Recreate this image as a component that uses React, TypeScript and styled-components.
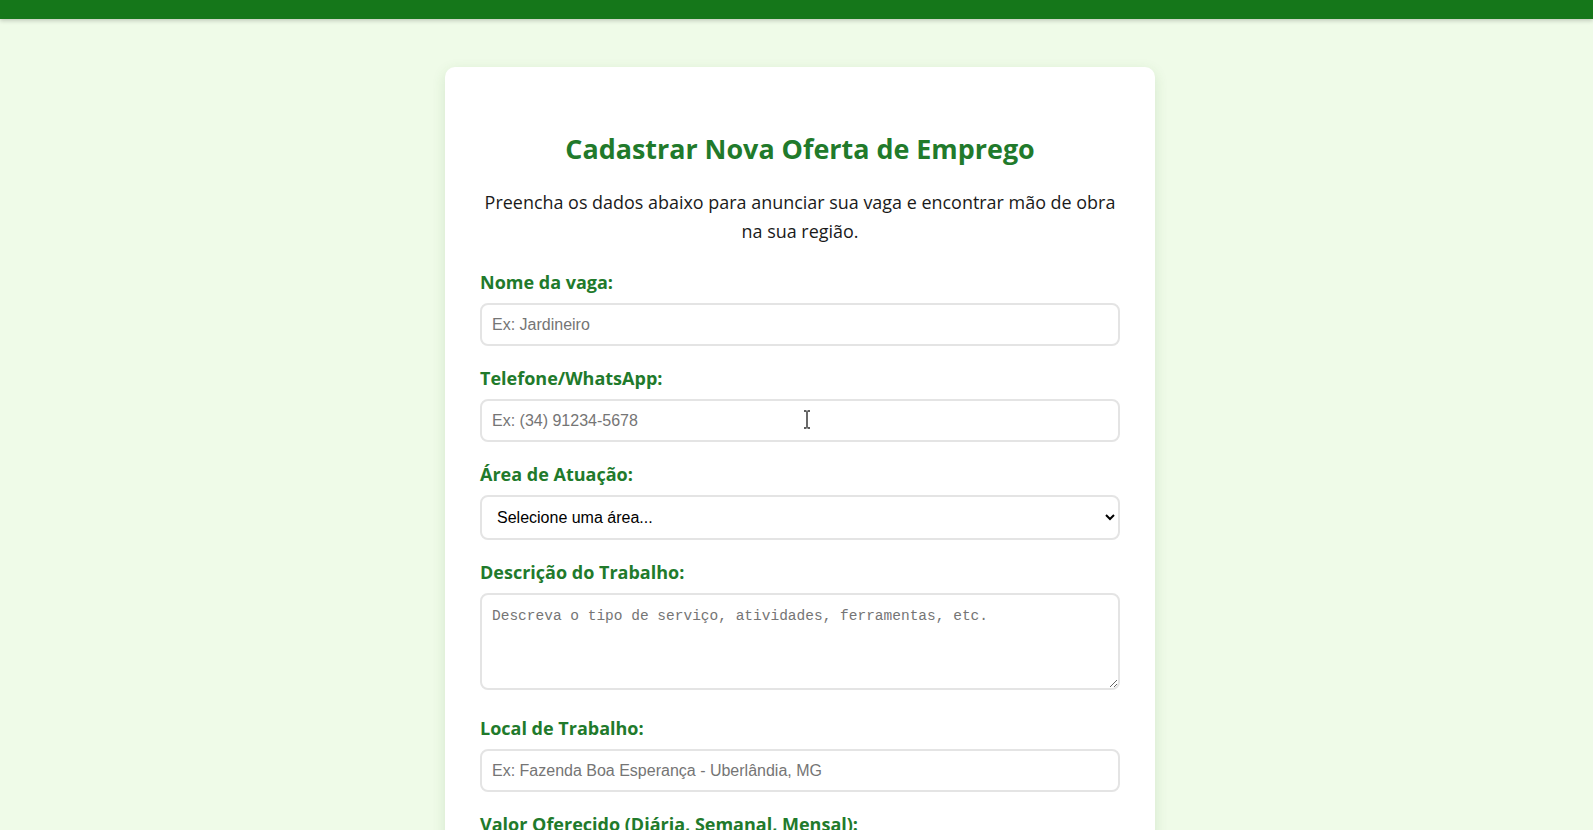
import React from "react";
import styled, { createGlobalStyle } from "styled-components";

const GlobalStyle = createGlobalStyle`
  html, body {
    margin: 0;
    padding: 0;
    background: #effbe8;
    scrollbar-width: none;
  }
  html::-webkit-scrollbar, body::-webkit-scrollbar { display: none; }
  body {
    font-family: "Open Sans", "Noto Sans", sans-serif;
    color: #1d1d1d;
  }
  * { box-sizing: border-box; }
`;

const TopBar = styled.header`
  height: 19px;
  background: #15771a;
  box-shadow: 0 2px 4px rgba(0, 0, 0, 0.18);
`;

const Main = styled.main`
  display: flex;
  justify-content: center;
  padding: 48px 0 48px 7px;
`;

const Card = styled.section`
  width: 710px;
  background: #ffffff;
  border-radius: 10px;
  box-shadow: 0 4px 14px rgba(60, 110, 40, 0.14);
  padding: 35px 35px 40px;
`;

const Title = styled.h2`
  margin: 31px 0 23.5px;
  font-size: 26.9px;
  line-height: 31px;
  font-weight: 700;
  text-align: center;
  color: #217a2b;
`;

const Intro = styled.p`
  margin: 0 0 25.5px;
  font-size: 17.95px;
  line-height: 29px;
  text-align: center;
  color: #1a1a1a;
`;

const Form = styled.form`
  display: flex;
  flex-direction: column;
`;

const Field = styled.div<{ $after?: number }>`
  position: relative;
  display: flex;
  flex-direction: column;
  gap: 9px;
  margin-bottom: ${(p) => p.$after ?? 21}px;
`;

const Label = styled.label`
  display: block;
  font-size: 18px;
  line-height: 23px;
  font-weight: 700;
  color: #217a2b;
`;

const controlBase = `
  width: 100%;
  border: 2px solid #e4e4e4;
  border-radius: 8px;
  background: #ffffff;
  color: #111;
  outline: none;
`;

const TextInput = styled.input`
  ${controlBase}
  height: 43px;
  padding: 0 10px;
  font-family: "Liberation Sans", Arial, sans-serif;
  font-size: 16px;
  &::placeholder { color: #757575; }
`;

const Select = styled.select`
  ${controlBase}
  height: 45px;
  padding: 0 11px;
  font-family: "Liberation Sans", Arial, sans-serif;
  font-size: 16px;
  color: #000;
`;

const TextArea = styled.textarea`
  ${controlBase}
  display: block;
  height: 97px;
  padding: 12px 10px;
  resize: vertical;
  font-family: "Liberation Mono", "DejaVu Sans Mono", monospace;
  font-size: 14.5px;
  line-height: 19px;
  &::placeholder { color: #757575; }
`;

const Cursor = styled.svg`
  position: absolute;
  left: 323px;
  top: 42.5px;
  width: 8px;
  height: 19px;
  pointer-events: none;
`;

const SubmitButton = styled.button`
  width: 100%;
  height: 48px;
  border: none;
  border-radius: 8px;
  background: #15771a;
  color: #fff;
  font-family: "Open Sans", sans-serif;
  font-size: 17px;
  font-weight: 700;
`;

export default function App() {
  return (
    <>
      <GlobalStyle />
      <TopBar />
      <Main>
        <Card>
          <Title>Cadastrar Nova Oferta de Emprego</Title>
          <Intro>
            Preencha os dados abaixo para anunciar sua vaga e encontrar mão de obra na sua região.
          </Intro>
          <Form onSubmit={(e) => e.preventDefault()}>
            <Field>
              <Label htmlFor="vaga">Nome da vaga:</Label>
              <TextInput id="vaga" placeholder="Ex: Jardineiro" />
            </Field>
            <Field>
              <Label htmlFor="tel">Telefone/WhatsApp:</Label>
              <TextInput id="tel" placeholder="Ex: (34) 91234-5678" />
              <Cursor viewBox="0 0 8 19">
                <path d="M1 1h2.5M4.5 1H7M4 1.5v16M1 18h2.5M4.5 18H7" stroke="#2b2b2b" strokeWidth="1.4" fill="none" />
              </Cursor>
            </Field>
            <Field>
              <Label htmlFor="area">Área de Atuação:</Label>
              <Select id="area" defaultValue="">
                <option value="">Selecione uma área...</option>
                <option value="agro">Agricultura</option>
                <option value="pecuaria">Pecuária</option>
                <option value="jardinagem">Jardinagem</option>
                <option value="construcao">Construção</option>
              </Select>
            </Field>
            <Field $after={27}>
              <Label htmlFor="desc">Descrição do Trabalho:</Label>
              <TextArea id="desc" placeholder="Descreva o tipo de serviço, atividades, ferramentas, etc." />
            </Field>
            <Field>
              <Label htmlFor="local">Local de Trabalho:</Label>
              <TextInput id="local" placeholder="Ex: Fazenda Boa Esperança - Uberlândia, MG" />
            </Field>
            <Field>
              <Label htmlFor="valor">Valor Oferecido (Diária, Semanal, Mensal):</Label>
              <TextInput id="valor" placeholder="Ex: R$ 120,00 por dia" />
            </Field>
            <SubmitButton type="submit">Publicar Vaga</SubmitButton>
          </Form>
        </Card>
      </Main>
    </>
  );
}
